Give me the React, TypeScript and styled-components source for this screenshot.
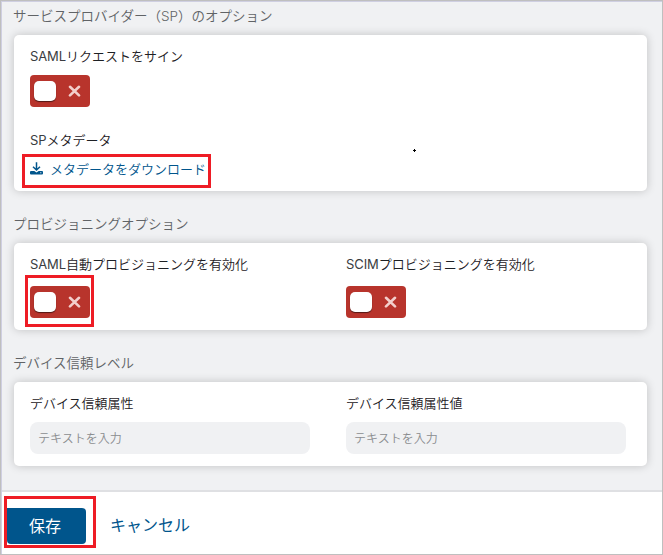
import React from "react";
import styled, { createGlobalStyle, css } from "styled-components";

const GlobalStyle = createGlobalStyle`
  * { box-sizing: border-box; }
  body { margin: 0; overflow: hidden; font-family: Inter, "Noto Sans CJK JP", sans-serif; }
`;

const Page = styled.div`
  width: 663px;
  height: 555px;
  display: flex;
  flex-direction: column;
  border: 1px solid #bfbfbf;
  background: #f0f1f3;
  box-shadow: inset 1px 1px 0 #cfcfe2;
  position: relative;
`;

const Content = styled.main`
  height: 489px;
  padding: 0 14px 0 13px;
`;

const SectionTitle = styled.h2<{ $height: number }>`
  margin: 0 0 0 -1px;
  height: ${(p) => p.$height}px;
  padding-bottom: 8px;
  display: flex;
  align-items: flex-end;
  font-size: 13.5px;
  line-height: 22px;
  font-weight: 350;
  color: #606366;
  white-space: nowrap;
`;

const Card = styled.section<{ $height: number }>`
  width: 633px;
  height: ${(p) => p.$height}px;
  padding: 11px 16px 0;
  border-radius: 5px;
  background: #fff;
  box-shadow: 0 0 10px rgba(0, 0, 0, 0.2);
`;

const Columns = styled.div`
  display: grid;
  grid-template-columns: 280px 280px;
  column-gap: 36px;
`;

const Label = styled.div<{ $gap: number; $top?: number }>`
  height: 20px;
  margin-top: ${(p) => p.$top ?? 0}px;
  margin-bottom: ${(p) => p.$gap}px;
  font-size: 13px;
  line-height: 20px;
  font-weight: 350;
  color: #1d2024;
  white-space: nowrap;
`;

const Latin = styled.span`
  font-weight: 400;
  letter-spacing: -0.1px;
  color: #3a3d41;
`;

const highlight = css`
  content: "";
  position: absolute;
  border: 3px solid #ee1c25;
  pointer-events: none;
`;

const ToggleTrack = styled.button<{ $marked?: boolean }>`
  position: relative;
  display: flex;
  align-items: center;
  width: 60px;
  height: 32px;
  padding: 0 9px 0 4px;
  justify-content: space-between;
  border: 0;
  border-radius: 4px;
  background: #b8342c;
  &::after {
    ${(p) => p.$marked && highlight}
    inset: -11px -4px -9px -5px;
  }
`;

const Knob = styled.span`
  width: 22px;
  height: 20px;
  border-radius: 5px;
  background: #fff;
  box-shadow: 0 1px 1px rgba(0, 0, 0, 0.55);
`;

const Download = styled.a`
  position: relative;
  display: flex;
  align-items: center;
  gap: 7px;
  width: 178px;
  height: 20px;
  padding-bottom: 2px;
  font-size: 13px;
  font-weight: 350;
  color: #00558c;
  white-space: nowrap;
  &::after {
    ${highlight}
    inset: -5px -3px -9px -8px;
  }
`;

const Field = styled.input`
  width: 280px;
  height: 32px;
  padding: 0 8px;
  border: 0;
  border-radius: 8px;
  background: #f0f1f3;
  font: 350 12px Inter, "Noto Sans CJK JP", sans-serif;
  &::placeholder { color: #8b8d90; opacity: 1; }
`;

const Footer = styled.footer`
  flex: 1;
  display: flex;
  align-items: flex-start;
  margin-left: 1px;
  padding: 16px 0 0 5px;
  border-top: 2px solid #dfe0e3;
  background: #fff;
`;

const Save = styled.button`
  position: relative;
  width: 79px;
  height: 36px;
  padding: 0 3px 2px 0;
  border: 0;
  border-radius: 0 4px 4px 4px;
  background: #00558c;
  color: #fff;
  font: 400 16px Inter, "Noto Sans CJK JP", sans-serif;
  &::after {
    ${highlight}
    inset: -12px -10px -4px -3px;
  }
`;

const Cancel = styled.a`
  margin-left: 24px;
  font-size: 16px;
  line-height: 34px;
  font-weight: 400;
  color: #00558c;
`;

const Pointer = styled.svg`
  position: absolute;
  left: 412px;
  top: 148px;
`;

function Toggle({ marked, label }: { marked?: boolean; label: string }) {
  return (
    <ToggleTrack $marked={marked} role="switch" aria-checked={false} aria-label={label}>
      <Knob />
      <svg width="13" height="12" viewBox="0 0 13 12">
        <path d="M2 1.8L11 10.4M11 1.8L2 10.4" stroke="#f3cfcc" strokeWidth="2.6" strokeLinecap="round" />
      </svg>
    </ToggleTrack>
  );
}

const DownloadIcon = () => (
  <svg width="13" height="13" viewBox="0 0 13 13" fill="none">
    <path d="M6.5 .3V7.5M3 4.8L6.5 8L10 4.8" stroke="#00558c" strokeWidth="1.5" />
    <path
      fillRule="evenodd"
      d="M1 9H4.3L6.5 10.4L8.7 9H12Q13 9 13 10V11.5Q13 12.5 12 12.5H1Q0 12.5 0 11.5V10Q0 9 1 9ZM10.3 10.2V11.2H11.3V10.2Z"
      fill="#00558c"
    />
  </svg>
);

export default function App() {
  return (
    <>
      <GlobalStyle />
      <Page>
        <Content>
          <SectionTitle $height={34}>サービスプロバイダー（SP）のオプション</SectionTitle>
          <Card $height={156}>
            <Label $gap={9}><Latin>SAML</Latin>リクエストをサイン</Label>
            <Toggle label="SAMLリクエストをサイン" />
            <Label $top={23} $gap={9}><Latin>SP</Latin>メタデータ</Label>
            <Download>
              <DownloadIcon />
              メタデータをダウンロード
            </Download>
          </Card>
          <SectionTitle $height={52}>プロビジョニングオプション</SectionTitle>
          <Card $height={87}>
            <Columns>
              <div>
                <Label $gap={12}><Latin>SAML</Latin>自動プロビジョニングを有効化</Label>
                <Toggle marked label="SAML自動プロビジョニングを有効化" />
              </div>
              <div>
                <Label $gap={12}><Latin>SCIM</Latin>プロビジョニングを有効化</Label>
                <Toggle label="SCIMプロビジョニングを有効化" />
              </div>
            </Columns>
          </Card>
          <SectionTitle $height={52}>デバイス信頼レベル</SectionTitle>
          <Card $height={84}>
            <Columns>
              <div>
                <Label $gap={9}>デバイス信頼属性</Label>
                <Field placeholder="テキストを入力" />
              </div>
              <div>
                <Label $gap={9}>デバイス信頼属性値</Label>
                <Field placeholder="テキストを入力" />
              </div>
            </Columns>
          </Card>
        </Content>
        <Footer>
          <Save>保存</Save>
          <Cancel>キャンセル</Cancel>
        </Footer>
        <Pointer width="3" height="3" viewBox="0 0 3 3">
          <path d="M1 0H2V1H3V2H2V3H1V2H0V1H1Z" fill="#000" />
        </Pointer>
      </Page>
    </>
  );
}
